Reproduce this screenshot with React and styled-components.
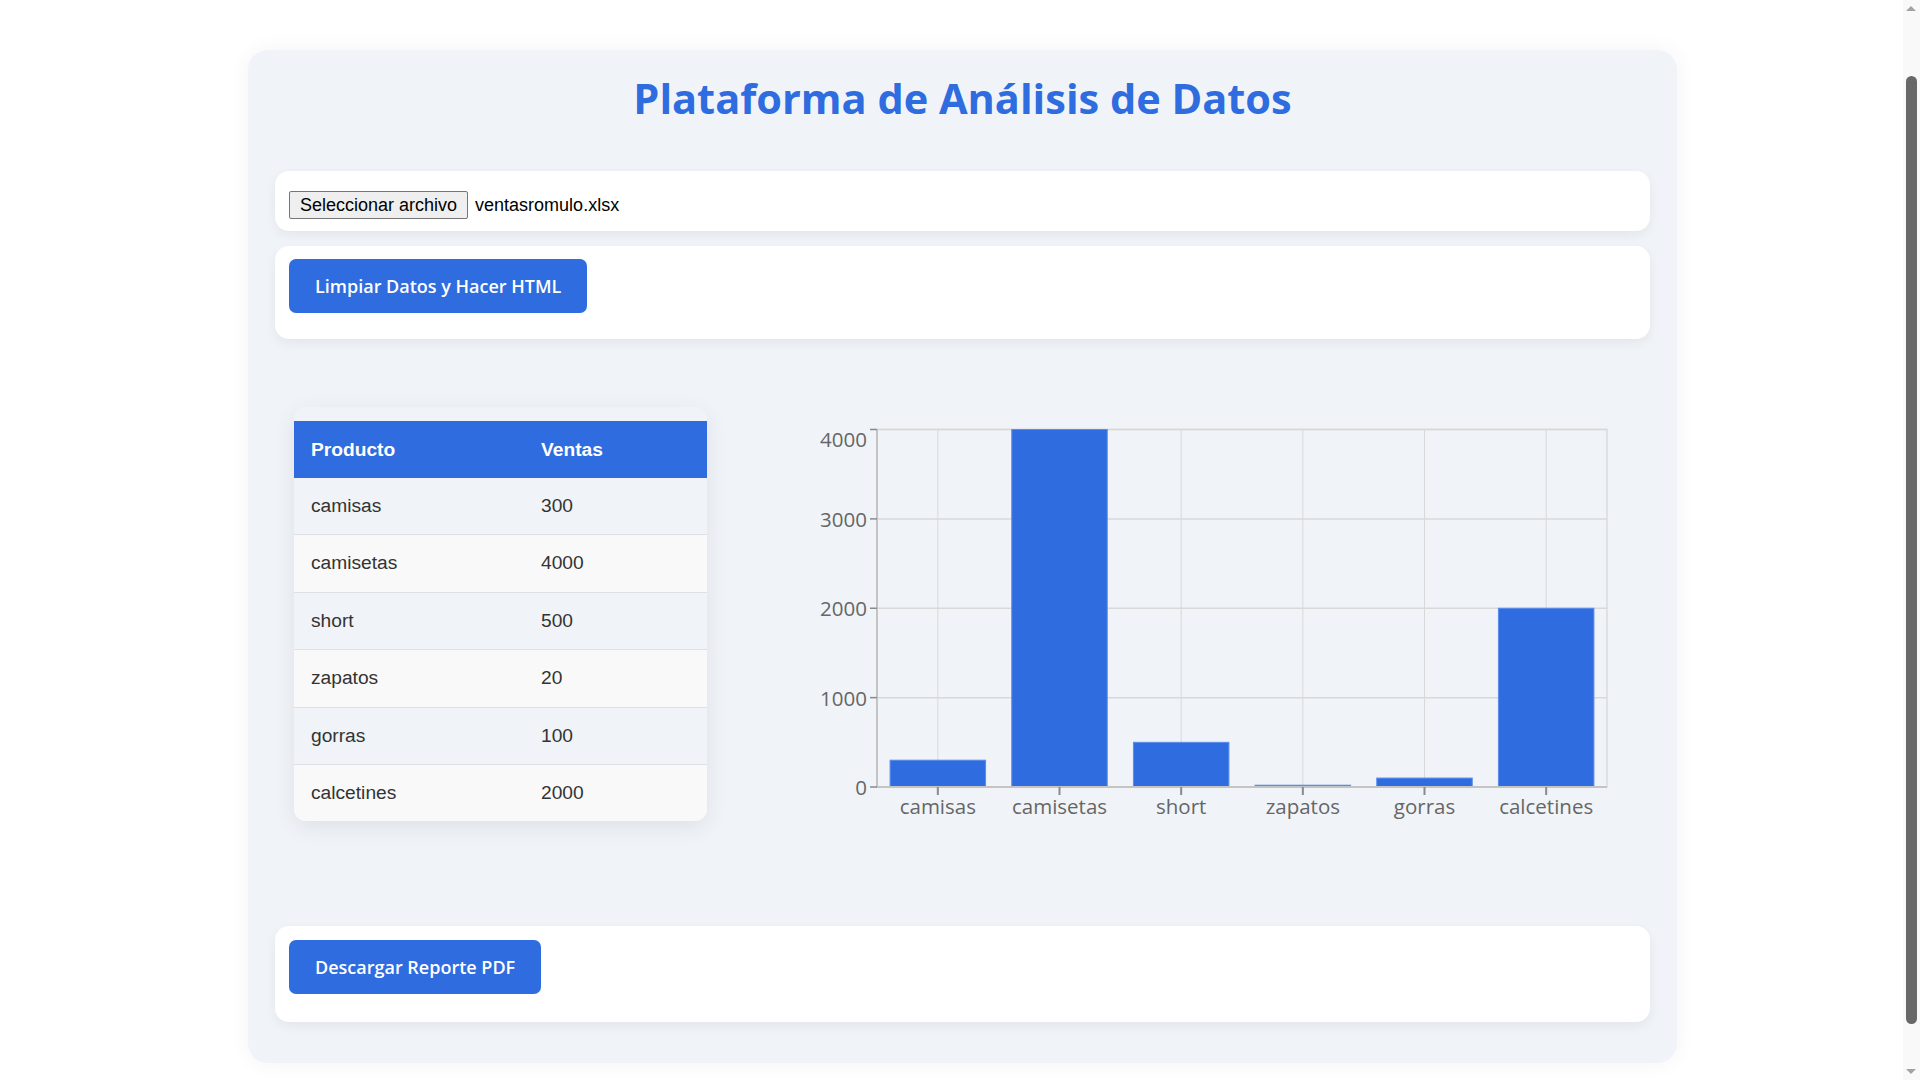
import React from "react";
import styled, { createGlobalStyle } from "styled-components";

const GlobalStyle = createGlobalStyle`
  html, body {
    margin: 0;
    padding: 0;
    background: #ffffff;
  }
  body {
    font-family: "Open Sans", "Noto Sans", sans-serif;
    overflow: hidden;
  }
  * {
    box-sizing: border-box;
  }
`;

const BLUE = "#2e6cdf";

const Page = styled.div`
  height: 1080px;
  padding: 50px 0 0 248px;
`;

const Container = styled.div`
  width: 1429px;
  background-color: #f0f4f8;
  border-radius: 20px;
  box-shadow: 0 0 22px rgba(0, 0, 0, 0.05);
  padding: 19px 27px 41px;
`;

const Title = styled.h1`
  margin: 0 0 44px;
  text-align: center;
  color: ${BLUE};
  font-family: "Open Sans", sans-serif;
  font-weight: 700;
  font-size: 41.5px;
  line-height: 58px;
`;

const paddings = {
  upload: "20px 14px 12px",
  action: "13px 14px 26px",
  report: "14px 14px 28px",
};

const Section = styled.div`
  background-color: #ffffff;
  border-radius: 14px;
  box-shadow: 0 4px 12px rgba(0, 0, 0, 0.06);
  padding: ${(p) => paddings[p.$variant]};
  & + & {
    margin-top: 15px;
  }
`;

const FileRow = styled.div`
  display: flex;
  align-items: center;
  gap: 7px;
  height: 28px;
  font-family: "Liberation Sans", Arial, sans-serif;
  color: #000;
`;

const FileButton = styled.span`
  display: inline-flex;
  align-items: center;
  height: 28px;
  padding: 0 10px;
  font-size: 18px;
  background-color: #efefef;
  border: 1px solid #767676;
  border-radius: 2px;
`;

const FileName = styled.span`
  font-size: 18px;
`;

const ActionButton = styled.button`
  display: block;
  background-color: ${BLUE};
  color: #ffffff;
  border: none;
  border-radius: 7px;
  font-family: "Open Sans", sans-serif;
  font-weight: 600;
  font-size: 18px;
  line-height: 26px;
  padding: 14px 26px;
  cursor: pointer;
`;

const Analysis = styled.div`
  display: flex;
  align-items: flex-start;
  gap: 103px;
  margin: 68px 19px 102px;
`;

const TableCard = styled.div`
  width: 413px;
  flex-shrink: 0;
  padding-top: 14px;
  border-radius: 12px;
  overflow: hidden;
  box-shadow: 0 6px 22px rgba(0, 0, 0, 0.08);
`;

const Table = styled.table`
  width: 100%;
  border-collapse: collapse;
  font-family: "Liberation Sans", Arial, sans-serif;
  font-size: 19.2px;
`;

const HeadCell = styled.th`
  background-color: ${BLUE};
  color: #ffffff;
  font-weight: 700;
  text-align: left;
  padding: 0 17px;
  line-height: 57px;
  width: ${(p) => p.$width || "auto"};
`;

const Row = styled.tr`
  background-color: ${(p) => (p.$odd ? "#f0f4f8" : "#f9f9f9")};
  border-bottom: 1px solid #dde0e4;
  &:last-child {
    border-bottom: none;
  }
`;

const Cell = styled.td`
  color: #333333;
  padding: 0 17px;
  line-height: 56.4px;
`;

const ChartSvg = styled.svg`
  display: block;
  margin-top: 7px;
  flex-shrink: 0;
  font-family: "Open Sans", sans-serif;
`;

const ScrollTrack = styled.div`
  position: fixed;
  top: 0;
  right: 0;
  width: 17px;
  height: 100vh;
  background-color: #f9f9f9;
`;

const ScrollThumb = styled.div`
  position: absolute;
  left: 3px;
  top: 76px;
  width: 11px;
  height: 948px;
  border-radius: 6px;
  background-color: #686868;
`;

const ScrollArrow = styled.div`
  position: absolute;
  left: 3px;
  width: 0;
  height: 0;
  border-left: 5.5px solid transparent;
  border-right: 5.5px solid transparent;
  ${(p) =>
    p.$down
      ? "bottom: 6px; border-top: 5px solid #a3a3a3;"
      : "top: 6px; border-bottom: 5px solid #a3a3a3;"}
`;

const sales = [
  { product: "camisas", value: 300 },
  { product: "camisetas", value: 4000 },
  { product: "short", value: 500 },
  { product: "zapatos", value: 20 },
  { product: "gorras", value: 100 },
  { product: "calcetines", value: 2000 },
];

const SalesChart = () => {
  const x0 = 67;
  const x1 = 797;
  const y0 = 15.5;
  const y1 = 373;
  const max = 4000;
  const step = (x1 - x0) / sales.length;
  const barW = 95.5;
  const yAt = (v) => y1 - (v / max) * (y1 - y0);
  const ticks = [0, 1000, 2000, 3000, 4000];

  return (
    <ChartSvg width="810" height="410" viewBox="0 0 810 410">
      <rect x={x0} y={y0} width={x1 - x0} height={y1 - y0} fill="none" stroke="#dadada" strokeWidth="1.5" />
      {ticks.map((t) => (
        <line key={"g" + t} x1={x0} x2={x1} y1={yAt(t)} y2={yAt(t)} stroke="#d8d8d8" strokeWidth="1.5" />
      ))}
      {sales.map((d, i) => {
        const cx = x0 + step * i + step / 2;
        return <line key={"v" + d.product} x1={cx} x2={cx} y1={y0} y2={y1} stroke="#d8d8d8" strokeWidth="1" />;
      })}
      {sales.map((d, i) => {
        const top = yAt(d.value);
        return (
          <rect
            key={d.product}
            x={x0 + step * i + (step - barW) / 2}
            y={top}
            width={barW}
            height={Math.max(y1 - top, 1.5)}
            fill="#2e6cdf"
            stroke="#5b8ceb"
            strokeWidth="1"
          />
        );
      })}
      <line x1={x0} x2={x0} y1={y0} y2={y1 + 1} stroke="#c4c4c4" strokeWidth="2" />
      <line x1={x0} x2={x1} y1={y1} y2={y1} stroke="#c4c4c4" strokeWidth="2" />
      {ticks.map((t) => (
        <g key={"t" + t}>
          <line x1={x0 - 7} x2={x0} y1={yAt(t)} y2={yAt(t)} stroke="#8a8a8a" strokeWidth="1.5" />
          <text
            x={x0 - 10}
            y={t === max ? yAt(t) + 9 : yAt(t)}
            textAnchor="end"
            dominantBaseline="central"
            fontSize="20.5"
            fill="#666666"
          >
            {t}
          </text>
        </g>
      ))}
      {sales.map((d, i) => {
        const cx = x0 + step * i + step / 2;
        return (
          <g key={"x" + d.product}>
            <line x1={cx} x2={cx} y1={y1} y2={y1 + 8} stroke="#8a8a8a" strokeWidth="2" />
            <text x={cx} y="400" textAnchor="middle" fontSize="20.5" fill="#666666">
              {d.product}
            </text>
          </g>
        );
      })}
    </ChartSvg>
  );
};

const App = () => {
  return (
    <>
      <GlobalStyle />
      <Page>
        <Container>
          <Title>Plataforma de Análisis de Datos</Title>

          <Section $variant="upload">
            <FileRow>
              <FileButton>Seleccionar archivo</FileButton>
              <FileName>ventasromulo.xlsx</FileName>
            </FileRow>
          </Section>
          <Section $variant="action">
            <ActionButton>Limpiar Datos y Hacer HTML</ActionButton>
          </Section>

          <Analysis>
            <TableCard>
              <Table>
                <thead>
                  <tr>
                    <HeadCell $width="230px">Producto</HeadCell>
                    <HeadCell>Ventas</HeadCell>
                  </tr>
                </thead>
                <tbody>
                  {sales.map((d, i) => (
                    <Row key={d.product} $odd={i % 2 === 0}>
                      <Cell>{d.product}</Cell>
                      <Cell>{d.value}</Cell>
                    </Row>
                  ))}
                </tbody>
              </Table>
            </TableCard>
            <SalesChart />
          </Analysis>

          <Section $variant="report">
            <ActionButton>Descargar Reporte PDF</ActionButton>
          </Section>
        </Container>
      </Page>
      <ScrollTrack>
        <ScrollArrow />
        <ScrollThumb />
        <ScrollArrow $down />
      </ScrollTrack>
    </>
  );
};

export default App;
